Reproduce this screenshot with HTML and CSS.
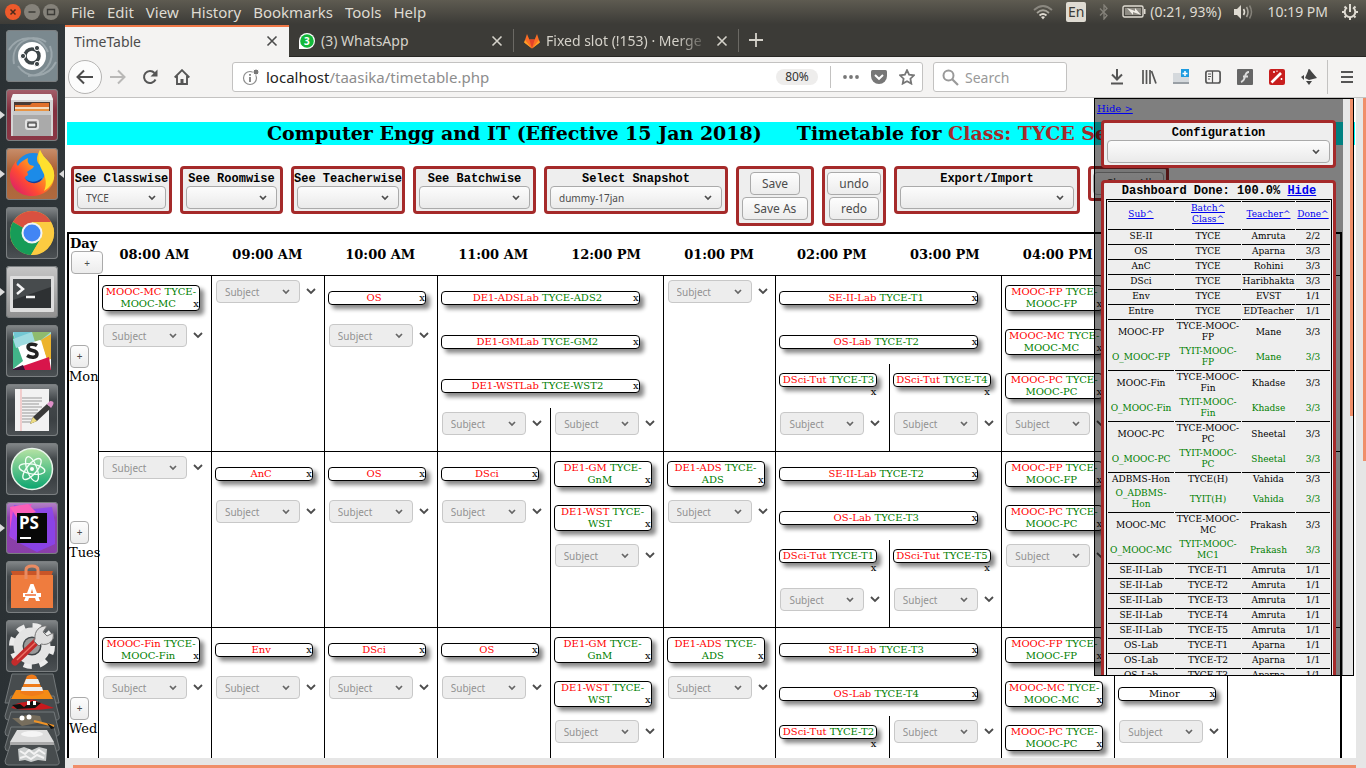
FILE: index.html
```html
<!DOCTYPE html>
<html lang="en">
<head>
<meta charset="utf-8">
<title>TimeTable</title>
<link rel="stylesheet" href="styles.css">
</head>
<body>
<header class="panel">
  <div class="winbtns">
    <button class="win win-close" aria-label="Close"><svg width="16" height="16" viewBox="0 0 16 16"><path d="M5.500 5.500l5 5M10.500 5.500l-5 5" stroke="#4a2a1c" stroke-width="1.500"/></svg></button>
    <button class="win" aria-label="Minimise"><svg width="16" height="16" viewBox="0 0 16 16"><path d="M4.500 8h7" stroke="#3c3b37" stroke-width="1.500"/></svg></button>
    <button class="win" aria-label="Maximise"><svg width="16" height="16" viewBox="0 0 16 16"><path d="M4.500 5.500h7v5h-7z" fill="none" stroke="#3c3b37" stroke-width="1.400"/></svg></button>
  </div>
  <nav class="menu"><a href="#">File</a><a href="#">Edit</a><a href="#">View</a><a href="#">History</a><a href="#">Bookmarks</a><a href="#">Tools</a><a href="#">Help</a></nav>
  <div class="tray">
    <svg width="20" height="16" viewBox="0 0 20 16" fill="none" stroke-width="1.800"><path d="M1 6q9-8 18 0" stroke="#8b8880"/><path d="M4 9q6-5.500 12 0" stroke="#a5a299"/><path d="M6.500 11.500q3.500-3 7 0" stroke="#dfdbd2"/><path d="M8 13l2 2.500 2-2.500q-2-1.500-4 0z" fill="#dfdbd2"/></svg>
    <span class="lang">En</span>
    <svg width="10" height="16" viewBox="0 0 10 16" fill="none" stroke="#85827a" stroke-width="1.300"><path d="M1 4.500l7 7L5 15V1l3 3.500-7 7"/></svg>
    <svg class="battery" width="24" height="13" viewBox="0 0 24 13"><rect x="1" y="1" width="20" height="11" rx="1.500" fill="none" stroke="#dfdbd2" stroke-width="1.400"/><rect x="3" y="3" width="16" height="7" fill="#8f8c84"/><path d="M22 4h1.500v5H22" fill="#dfdbd2"/><path d="M5 3l8 3V3l6 7-8-3v3z" fill="#f0ede6"/></svg>
    <span class="charge">(0:21, 93%)</span>
    <svg width="20" height="16" viewBox="0 0 20 16" fill="none"><path d="M0 5h3l4-4v14l-4-4H0z" fill="#dfdbd2"/><path d="M9.500 5q2 3 0 6" stroke="#dfdbd2" stroke-width="1.600"/><path d="M12.500 3q3 5 0 10" stroke="#a5a299" stroke-width="1.600"/><path d="M15.500 1.500q4 6.500 0 13" stroke="#85827a" stroke-width="1.500"/></svg>
    <span class="clock">10:19 PM</span>
    <svg width="18" height="18" viewBox="0 0 18 18" fill="none" stroke="#dfdbd2"><path d="M6 4.500a5.300 5.300 0 1 0 6 0" stroke-width="2"/><path d="M9 1v8" stroke-width="2"/><path d="M3.500 3.500l1.500 1.500M14.500 3.500L13 5M1 9h2.500M14.500 9H17M3.500 14.500L5 13M14.500 14.500L13 13M9 14.500V17" stroke-width="2"/></svg>
  </div>
</header>
<div class="desktop">
<aside class="launcher">
  <button class="tile t-dash" aria-label="Dash"><svg width="52" height="52" viewBox="0 0 52 52"><path d="M8 34C4 12 26 2 40 12M44 16c6 16-6 30-22 30M3 20C12 4 34 4 42 22M50 32c-8 16-28 18-38 4" fill="none" stroke="#aab4b8" stroke-width="2" opacity=".7"/><circle cx="26" cy="26" r="14" fill="#fff"/><circle cx="26" cy="26" r="7" fill="none" stroke="#3e4649" stroke-width="3.500"/><g fill="#3e4649" stroke="#fff"><circle cx="17" cy="26" r="2.600"/><circle cx="31" cy="18" r="2.600"/><circle cx="31" cy="34" r="2.600"/></g></svg></button>
  <button class="tile t-files run" aria-label="Files"><svg width="52" height="52" viewBox="0 0 52 52"><path d="M7 5h38l2 5v37H5V10z" fill="#d4d4d4"/><path d="M7 5h38l2 6H5z" fill="#f2f2f2"/><path d="M8 13h36v10H8z" fill="#4a3b35"/><path d="M9 16h15l2-2h17v8H9z" fill="#e0702c"/><path d="M9 18h34v4H9z" fill="#f4dcc0"/><path d="M9 20h34v3H9z" fill="#e99443"/><path d="M7 22h38v25H7z" fill="#aaa"/><path d="M7 22h38v4H7z" fill="#c8c8c8"/><rect x="20" y="31" width="12" height="9" rx="2" fill="#999" stroke="#e2e2e2" stroke-width="2"/><path d="M22 34h8v4h-8z" fill="#eee" stroke="#333"/></svg></button>
  <button class="tile t-firefox run active" aria-label="Firefox"><svg width="52" height="52" viewBox="0 0 52 52"><defs><linearGradient id="ff" x1="1" y1="0" x2="0" y2="1"><stop offset="0" stop-color="#fff34f"/><stop offset=".35" stop-color="#ffa81c"/><stop offset=".65" stop-color="#ff4a33"/><stop offset="1" stop-color="#d0127c"/></linearGradient></defs><circle cx="27" cy="23" r="18" fill="#1c8be8"/><path d="M34 2c2 4 3 6 7 10 5 5 8 11 7 18-1 11-11 18-22 18C13 48 4 39 4 28c0-7 3-10 6-15 0 3 1 4 2 5 2-4 6-6 10-8-1 3 0 5 2 7l4 1c-1 3-5 4-7 6 3 5-2 3-2 6 2 5 11 6 17 2 5-6 3-12-2-15-5-4-3-10 0-15z" fill="url(#ff)"/><path d="M34 2c2 4 3 6 7 10 5 5 8 11 7 18-1 5-5 10-10 13 3-6 2-13-1-19-4-7-6-14-3-22z" fill="#ffe02e"/><path d="M18 29c3 6 13 6 18 1-1 6-13 8-18-1z" fill="#173c9b"/></svg></button>
  <button class="tile" aria-label="Chrome"><svg width="52" height="52" viewBox="0 0 52 52"><circle cx="26" cy="26" r="22" fill="#fbc93d"/><path d="M26 26L7 15a22 22 0 0 1 38 0H26z" fill="#d95140"/><path d="M26 26L7 15a22 22 0 0 0 18 33l10-17z" fill="#179c58"/><path d="M26 15h19a22 22 0 0 1-20 33l10-17z" fill="#fccb41"/><circle cx="26" cy="26" r="10.500" fill="#f4f4f4"/><circle cx="26" cy="26" r="8.500" fill="#4285f4"/></svg></button>
  <button class="tile t-term run" aria-label="Terminal"><svg width="52" height="52" viewBox="0 0 52 52"><rect x="4" y="10" width="44" height="36" rx="1" fill="#dedede"/><path d="M7 13h38v29H7z" fill="#2e3133"/><path d="M7 13h38v8L7 34z" fill="#474b4d"/><path d="M11 18l6 5-6 5M20 31h9" stroke="#f4f4f4" stroke-width="2.500" fill="none"/></svg></button>
  <button class="tile" aria-label="Slack"><svg width="52" height="52" viewBox="0 0 52 52"><path d="M7 7h38v38H7z" fill="#fff"/><path d="M7 7h21L10 19z" fill="#72c7d3"/><path d="M7 9l10 27L7 44z" fill="#42b589"/><path d="M26 7h19v5l-9 3-10 3-16 5-3-9z" fill="#9edbe0"/><path d="M26 7h10l-1 8-6 2zM36 7h9L35 15z" fill="#8fbb6e"/><path d="M35 15l10-6v25l-4 1z" fill="#ecb32d"/><path d="M14 21l20-6 7 20-21 7z" fill="#fff"/><path d="M17 41l26-9 2 13H16z" fill="#d8154b"/><path d="M7 44l10-4 2 5H7z" fill="#3b1538"/><path d="M31 20.500c-3-2-9-2-9 1.500 0 5 9 2 9 7 0 4-6 4-10 1.500" fill="none" stroke="#222" stroke-width="3.500"/></svg></button>
  <button class="tile" aria-label="Text Editor"><svg width="52" height="52" viewBox="0 0 52 52"><path d="M9 5h34v42H9z" fill="#f2f2f2"/><path d="M15 5v42" stroke="#f0a9a9"/><path d="M16 14h20M16 17h20M16 20h17M16 23h20M16 26h16M16 29h18M16 32h14M16 35h12M16 38h10" stroke="#999"/><path d="M24 40l3-7 14-13 4 4-14 13z" fill="#3a3a3a"/><path d="M24 40l3-7 4 4z" fill="#eddc81"/><path d="M41 20l3-3q5 0 3 4l-2 3z" fill="#dd8fc7"/></svg></button>
  <button class="tile" aria-label="Atom"><svg width="52" height="52" viewBox="0 0 52 52"><defs><linearGradient id="at" x2="0" y2="1"><stop stop-color="#b7e3a4"/><stop offset="1" stop-color="#0aa56f"/></linearGradient></defs><circle cx="26" cy="26" r="20.500" fill="url(#at)" stroke="#e8f4ea" stroke-width="1.500"/><g fill="none" stroke="#f4fff8" stroke-width="1.300"><ellipse cx="26" cy="26" rx="13" ry="5" transform="rotate(10 26 26)"/><ellipse cx="26" cy="26" rx="13" ry="5" transform="rotate(70 26 26)"/><ellipse cx="26" cy="26" rx="13" ry="5" transform="rotate(130 26 26)"/></g><circle cx="26" cy="26" r="2" fill="#fff"/></svg></button>
  <button class="tile t-ps run" aria-label="PhpStorm"><svg width="52" height="52" viewBox="0 0 52 52"><path d="M4 5l22-3-8 14-9 22-5-3z" fill="#f04ec4"/><path d="M8 3l20 4 18-2 3 15v22l-18 8-16-8L3 34z" fill="#8a43f4" opacity=".8"/><path d="M4 5l18-3 8 8-19 6z" fill="#fb5fb8"/><path d="M11 11h30v30H11z" fill="#080808"/><text x="13" y="27" class="logo-ps">PS</text><path d="M14 36h11" stroke="#fff" stroke-width="2"/></svg></button>
  <button class="tile" aria-label="Ubuntu Software"><svg width="52" height="52" viewBox="0 0 52 52"><path d="M5 10h42l-2 6H7z" fill="#c95527"/><path d="M5 14h42v33H5z" fill="#ef7c3e"/><path d="M20 18V9q0-4 6-4t6 4v9" fill="none" stroke="#e98b62" stroke-width="3"/><path d="M18 40l6.500-17h3L34 40h-4l-1-3h-6l-1 3zM24.500 33h3L26 28z" fill="#fff"/><path d="M17 34h18" stroke="#fff" stroke-width="4"/><path d="M19 34h11" stroke="#ee6c33" stroke-width="1.500"/></svg></button>
  <button class="tile" aria-label="Settings"><svg width="52" height="52" viewBox="0 0 52 52"><circle cx="26" cy="26" r="20" fill="none" stroke="#ececec" stroke-width="6" stroke-dasharray="8 7.700"/><circle cx="26" cy="26" r="14" fill="none" stroke="#e4e4e4" stroke-width="9"/><circle cx="26" cy="26" r="8" fill="#999"/><path d="M9 42L32 20" stroke="#c32b2b" stroke-width="7" stroke-linecap="round"/><path d="M11 40L31 21" stroke="#ea7064" stroke-width="1.500"/><path d="M29 19c-1-8 5-14 12-13l-4 6 4 4 6-3c2 8-5 13-12 11l-2 2-5-5z" fill="#dedede" stroke="#777"/></svg></button>
  <svg class="stack" width="65" height="96" viewBox="0 0 65 96"><g fill="#474c4e" stroke="#73787a"><path d="M12 1h41l6 29H5z"/><path d="M11 23l-6 20q0 4 3 4h48q4 0 3-4l-5-20z"/><path d="M11 39l-6 20q0 4 3 4h48q4 0 3-4l-5-20z"/><path d="M11 54l-6 20q0 4 3 4h48q4 0 3-4l-5-20z"/><path d="M11 70l-6 18q0 4 3 4h48q4 0 3-4l-5-18z"/></g><path d="M16 17h32l5 9H11z" fill="#f58b16"/><path d="M27 3q5-3 9 0l8 17q-12 6-24 0z" fill="#f07b1a"/><path d="M26 6h12l2 5H24zM22 14h20l1 4H21z" fill="#eee"/><path d="M11 35q5-6 15-6 6-5 12 0l16 6q-24 4-43 0z" fill="#c9191d"/><path d="M12 32l8-1 4 3 8-6 9 2-6 5-18 1z" fill="#111"/><path d="M27 28h3v4h-3zM33 28h3v4h-3z" fill="#fff"/><path d="M12 45h8q4-5 20-2l2 6-20 4z" fill="#776e5d"/><circle cx="22" cy="45" r="2.500" fill="#fff"/><circle cx="29" cy="44" r="2.500" fill="#fff"/><path d="M34 48l20 5" stroke="#ef9327" stroke-width="2"/><path d="M47 50l8 5-4 1z" fill="#111"/><path d="M17 57h30l7 12H10z" fill="#ddd"/><path d="M10 69h44v3H10z" fill="#aaa"/><ellipse cx="32" cy="61" rx="11" ry="3" fill="#f5f5f5"/><path d="M18 76l6-2 8 3 7-3 8 2-1 12-8-1-7 2-6-2-6 1z" fill="#c9cccc"/><path d="M20 78l5 3 4-4 5 4 5-4 6 4M20 85l6-2 5 3 6-4 7 3" stroke="#f3f3f3" stroke-width="2" fill="none"/></svg>
</aside>
<main class="browser">
  <div class="tabs">
    <div class="tab tab-on"><span class="tab-title">TimeTable</span><button class="ic" aria-label="Close tab"><svg width="12" height="12" viewBox="0 0 12 12"><path d="M1.500 1.500l9 9M10.500 1.500l-9 9" stroke="currentColor" stroke-width="1.600"/></svg></button></div>
    <div class="tab"><svg width="16" height="16" viewBox="0 0 16 16"><path d="M0 16V8a8 8 0 1 1 8 8z" fill="#fff"/><circle cx="8" cy="8" r="6.800" fill="#12b83a"/><text x="5" y="12" class="badge-no">3</text></svg><span class="tab-title">(3) WhatsApp</span><button class="ic" aria-label="Close tab"><svg width="12" height="12" viewBox="0 0 12 12"><path d="M1.500 1.500l9 9M10.500 1.500l-9 9" stroke="currentColor" stroke-width="1.600"/></svg></button></div>
    <div class="tab"><svg width="16" height="16" viewBox="0 0 16 16"><path d="M8 15.500L.2 9.500 3 1l2.300 5.500h5.400L13 1l2.800 8.500z" fill="#fc6d26"/><path d="M8 15.500L5.300 6.500h5.400z" fill="#e24329"/><path d="M8 15.500L.2 9.500l.8-2.500zM8 15.500l7.800-6L15 7z" fill="#fca326"/></svg><span class="tab-title fade">Fixed slot (!153) · Merge</span><button class="ic" aria-label="Close tab"><svg width="12" height="12" viewBox="0 0 12 12"><path d="M1.500 1.500l9 9M10.500 1.500l-9 9" stroke="currentColor" stroke-width="1.600"/></svg></button></div>
    <button class="ic newtab" aria-label="New tab"><svg width="14" height="14" viewBox="0 0 14 14"><path d="M7 0v14M0 7h14" stroke="currentColor" stroke-width="1.800"/></svg></button>
  </div>
  <div class="navbar">
    <button class="ic back" aria-label="Back"><svg width="18" height="16" viewBox="0 0 18 16"><path d="M17 8H2M8 1.500L1.500 8 8 14.500" fill="none" stroke="#4c4c4c" stroke-width="2"/></svg></button>
    <button class="ic" aria-label="Forward"><svg width="16" height="16" viewBox="0 0 16 16"><path d="M0 8h14M8 1.500L14.500 8 8 14.500" fill="none" stroke="#b9b8b7" stroke-width="2"/></svg></button>
    <button class="ic" aria-label="Reload"><svg width="16" height="16" viewBox="0 0 16 16"><path d="M13.500 10.500A6 6 0 1 1 12.500 4" fill="none" stroke="#555" stroke-width="2"/><path d="M15.500.5v7h-7z" fill="#555"/></svg></button>
    <button class="ic" aria-label="Home"><svg width="16" height="16" viewBox="0 0 16 16"><path d="M.7 8.500L8 1.200l7.300 7.300M3 7v8h10V7" fill="none" stroke="#555" stroke-width="1.900"/><path d="M6.500 15v-5h3v5z" fill="#555"/></svg></button>
    <div class="urlbar">
      <svg width="18" height="18" viewBox="0 0 18 18"><circle cx="8" cy="10" r="6.500" fill="none" stroke="#8d8d8d" stroke-width="1.200"/><path d="M8 9v5M8 6v1.800" stroke="#777" stroke-width="1.700"/><circle cx="14" cy="4" r="3" fill="#777" stroke="#fff"/></svg>
      <span class="url">localhost<i>/taasika/timetable.php</i></span>
      <button class="zoom">80%</button>
      <span class="rule"></span>
      <button class="ic" aria-label="Page actions"><svg width="16" height="4" viewBox="0 0 16 4" fill="#777"><circle cx="2" cy="2" r="1.900"/><circle cx="8" cy="2" r="1.900"/><circle cx="14" cy="2" r="1.900"/></svg></button>
      <button class="ic" aria-label="Pocket"><svg width="16" height="14" viewBox="0 0 16 14"><path d="M1.500 0h13Q16 0 16 1.500V6A8 8 0 0 1 0 6V1.500Q0 0 1.500 0z" fill="#777"/><path d="M4 5l4 3.800L12 5" fill="none" stroke="#fff" stroke-width="2"/></svg></button>
      <button class="ic" aria-label="Bookmark"><svg width="16" height="16" viewBox="0 0 16 16"><path d="M8 1.200l2.100 4.500 4.900.6-3.600 3.400.9 4.900L8 12.200l-4.300 2.400.9-4.900L1 6.300l4.900-.6z" fill="none" stroke="#777" stroke-width="1.800"/></svg></button>
    </div>
    <label class="search"><svg width="17" height="17" viewBox="0 0 17 17"><circle cx="6.500" cy="6.500" r="5" fill="none" stroke="#999" stroke-width="2"/><path d="M10 10l6 6" stroke="#999" stroke-width="2.200"/></svg><input type="text" placeholder="Search" aria-label="Search"></label>
    <div class="tools">
      <button class="ic" aria-label="Downloads"><svg width="16" height="16" viewBox="0 0 16 16"><path d="M8 0v10M3 5.500l5 5 5-5M2 14.500h12" fill="none" stroke="#555" stroke-width="2"/></svg></button>
      <button class="ic" aria-label="Library"><svg width="16" height="16" viewBox="0 0 16 16"><path d="M2 1v14M5.500 1v14M9 1v14M10.500 2L15 14.500" stroke="#555" stroke-width="1.700"/></svg></button>
      <button class="ic" aria-label="Containers"><svg width="16" height="16" viewBox="0 0 16 16"><path d="M0 4h8v4h8v7H0z" fill="#d5d9dd"/><path d="M0 13h16v2H0z" fill="#999fa5"/><path d="M8 0h8v8H8z" fill="#1e9be0"/><path d="M12 2v5M9.500 4.500h5" stroke="#fff" stroke-width="1.500"/></svg></button>
      <button class="ic" aria-label="Sidebar"><svg width="16" height="16" viewBox="0 0 16 16"><rect x=".9" y="2" width="14.200" height="12" rx="2" fill="none" stroke="#555" stroke-width="1.700"/><path d="M7.500 2v12M3 5h3M3 7.500h3M3 10h2" stroke="#555" stroke-width="1.200"/></svg></button>
      <button class="ic" aria-label="Flash"><svg width="16" height="16" viewBox="0 0 16 16"><rect width="16" height="16" rx="1" fill="#666"/><path d="M12 3q-3 0-4 4.500T4 13M6 7.500h5" fill="none" stroke="#ddd" stroke-width="1.900"/></svg></button>
      <button class="ic" aria-label="Wand"><svg width="16" height="16" viewBox="0 0 16 16"><rect width="16" height="16" rx="2" fill="#c81e1e"/><path d="M2.500 13.500L12 4" stroke="#fff" stroke-width="2.600"/><path d="M5 2v2M4 3h2M12.500 9v2M11.500 10h2M8 1.500v1.500" stroke="#fff"/></svg></button>
      <button class="ic" aria-label="Extension"><svg width="16" height="16" viewBox="0 0 16 16" fill="#444"><path d="M8 0q1 0 2 2l6 7-8 2-4-2 3-7q0-2 1-2zM0 8l3-2v5zM5 12l6 0-3 4z"/></svg></button>
      <span class="rule rule-tall"></span>
      <button class="ic" aria-label="Menu"><svg width="12" height="12" viewBox="0 0 12 12"><path d="M0 1h12M0 6h12M0 11h12" stroke="#555" stroke-width="1.800"/></svg></button>
    </div>
  </div>
  <div class="viewport">
    <div class="page">
      <h2 class="banner">Computer Engg and IT (Effective 15 Jan 2018)<span class="banner-for">Timetable for <em>Class: TYCE Sem</em></span></h2>
      <div class="controls">
        <div class="box w-class"><label for="s1">See Classwise</label><select id="s1"><option>TYCE</option></select></div>
        <div class="box w-room"><label for="s2">See Roomwise</label><select id="s2"><option></option></select></div>
        <div class="box w-teacher"><label for="s3">See Teacherwise</label><select id="s3"><option></option></select></div>
        <div class="box w-batch"><label for="s4">See Batchwise</label><select id="s4"><option></option></select></div>
        <div class="box w-snap"><label for="s5">Select Snapshot</label><select id="s5"><option>dummy-17jan</option></select></div>
        <div class="box w-save"><button class="btn">Save</button><button class="btn">Save As</button></div>
        <div class="box w-undo"><button class="btn">undo</button><button class="btn">redo</button></div>
        <div class="box w-export"><label for="s6">Export/Import</label><select id="s6"><option></option></select></div>
        <div class="box w-clear"><button class="btn">Clear All</button></div>
      </div>
      <table class="tt">
        <colgroup><col class="col-day"><col span="11"></colgroup>
        <thead><tr><th class="day">Day<button class="btn plus-wide">+</button></th><th>08:00 AM</th><th>09:00 AM</th><th>10:00 AM</th><th>11:00 AM</th><th>12:00 PM</th><th>01:00 PM</th><th>02:00 PM</th><th>03:00 PM</th><th>04:00 PM</th><th>05:00 PM</th><th>06:00 PM</th></tr></thead>
        <tbody>
        <tr>
          <th class="day dayname"><button class="btn plus">+</button>Mon</th>
          <td>
            <div class="slot"><div class="chip"><b>MOOC-MC</b> <i>TYCE-MOOC-MC</i><button class="del">x</button></div></div>
            <div class="slot add"><select disabled aria-label="Subject"><option>Subject</option></select><select class="more" aria-label="More"></select></div>
          </td>
          <td><div class="slot add"><select disabled aria-label="Subject"><option>Subject</option></select><select class="more" aria-label="More"></select></div></td>
          <td>
            <div class="slot"><div class="chip"><b>OS</b><button class="del">x</button></div></div>
            <div class="slot add"><select disabled aria-label="Subject"><option>Subject</option></select><select class="more" aria-label="More"></select></div>
          </td>
          <td colspan="2">
            <div class="slot"><div class="chip wide"><b>DE1-ADSLab</b> <i>TYCE-ADS2</i><button class="del">x</button></div></div>
            <div class="slot"><div class="chip wide"><b>DE1-GMLab</b> <i>TYCE-GM2</i><button class="del">x</button></div></div>
            <div class="slot"><div class="chip wide"><b>DE1-WSTLab</b> <i>TYCE-WST2</i><button class="del">x</button></div></div>
            <div class="split">
              <div class="slot add"><select disabled aria-label="Subject"><option>Subject</option></select><select class="more" aria-label="More"></select></div>
              <div class="slot add"><select disabled aria-label="Subject"><option>Subject</option></select><select class="more" aria-label="More"></select></div>
            </div>
          </td>
          <td><div class="slot add"><select disabled aria-label="Subject"><option>Subject</option></select><select class="more" aria-label="More"></select></div></td>
          <td colspan="2">
            <div class="slot"><div class="chip wide"><b>SE-II-Lab</b> <i>TYCE-T1</i><button class="del">x</button></div></div>
            <div class="slot"><div class="chip wide"><b>OS-Lab</b> <i>TYCE-T2</i><button class="del">x</button></div></div>
            <div class="split">
              <div class="slot"><div class="chip full"><b>DSci-Tut</b> <i>TYCE-T3</i><button class="del">x</button></div></div>
              <div class="slot"><div class="chip full"><b>DSci-Tut</b> <i>TYCE-T4</i><button class="del">x</button></div></div>
              <div class="slot add"><select disabled aria-label="Subject"><option>Subject</option></select><select class="more" aria-label="More"></select></div>
              <div class="slot add"><select disabled aria-label="Subject"><option>Subject</option></select><select class="more" aria-label="More"></select></div>
            </div>
          </td>
          <td>
            <div class="slot"><div class="chip"><b>MOOC-FP</b> <i>TYCE-MOOC-FP</i><button class="del">x</button></div></div>
            <div class="slot"><div class="chip"><b>MOOC-MC</b> <i>TYCE-MOOC-MC</i><button class="del">x</button></div></div>
            <div class="slot"><div class="chip"><b>MOOC-PC</b> <i>TYCE-MOOC-PC</i><button class="del">x</button></div></div>
            <div class="slot add"><select disabled aria-label="Subject"><option>Subject</option></select><select class="more" aria-label="More"></select></div>
          </td>
          <td></td><td></td>
        </tr>
        <tr>
          <th class="day dayname"><button class="btn plus">+</button>Tues</th>
          <td><div class="slot add"><select disabled aria-label="Subject"><option>Subject</option></select><select class="more" aria-label="More"></select></div></td>
          <td>
            <div class="slot"><div class="chip"><b>AnC</b><button class="del">x</button></div></div>
            <div class="slot add"><select disabled aria-label="Subject"><option>Subject</option></select><select class="more" aria-label="More"></select></div>
          </td>
          <td>
            <div class="slot"><div class="chip"><b>OS</b><button class="del">x</button></div></div>
            <div class="slot add"><select disabled aria-label="Subject"><option>Subject</option></select><select class="more" aria-label="More"></select></div>
          </td>
          <td>
            <div class="slot"><div class="chip"><b>DSci</b><button class="del">x</button></div></div>
            <div class="slot add"><select disabled aria-label="Subject"><option>Subject</option></select><select class="more" aria-label="More"></select></div>
          </td>
          <td>
            <div class="slot"><div class="chip"><b>DE1-GM</b> <i>TYCE-GnM</i><button class="del">x</button></div></div>
            <div class="slot"><div class="chip"><b>DE1-WST</b> <i>TYCE-WST</i><button class="del">x</button></div></div>
            <div class="slot add"><select disabled aria-label="Subject"><option>Subject</option></select><select class="more" aria-label="More"></select></div>
          </td>
          <td>
            <div class="slot"><div class="chip"><b>DE1-ADS</b> <i>TYCE-ADS</i><button class="del">x</button></div></div>
            <div class="slot add"><select disabled aria-label="Subject"><option>Subject</option></select><select class="more" aria-label="More"></select></div>
          </td>
          <td colspan="2">
            <div class="slot"><div class="chip wide"><b>SE-II-Lab</b> <i>TYCE-T2</i><button class="del">x</button></div></div>
            <div class="slot"><div class="chip wide"><b>OS-Lab</b> <i>TYCE-T3</i><button class="del">x</button></div></div>
            <div class="split">
              <div class="slot"><div class="chip full"><b>DSci-Tut</b> <i>TYCE-T1</i><button class="del">x</button></div></div>
              <div class="slot"><div class="chip full"><b>DSci-Tut</b> <i>TYCE-T5</i><button class="del">x</button></div></div>
              <div class="slot add"><select disabled aria-label="Subject"><option>Subject</option></select><select class="more" aria-label="More"></select></div>
              <div class="slot add"><select disabled aria-label="Subject"><option>Subject</option></select><select class="more" aria-label="More"></select></div>
            </div>
          </td>
          <td>
            <div class="slot"><div class="chip"><b>MOOC-FP</b> <i>TYCE-MOOC-FP</i><button class="del">x</button></div></div>
            <div class="slot"><div class="chip"><b>MOOC-PC</b> <i>TYCE-MOOC-PC</i><button class="del">x</button></div></div>
            <div class="slot add"><select disabled aria-label="Subject"><option>Subject</option></select><select class="more" aria-label="More"></select></div>
          </td>
          <td></td><td></td>
        </tr>
        <tr>
          <th class="day dayname"><button class="btn plus">+</button>Wed</th>
          <td>
            <div class="slot"><div class="chip"><b>MOOC-Fin</b> <i>TYCE-MOOC-Fin</i><button class="del">x</button></div></div>
            <div class="slot add"><select disabled aria-label="Subject"><option>Subject</option></select><select class="more" aria-label="More"></select></div>
          </td>
          <td>
            <div class="slot"><div class="chip"><b>Env</b><button class="del">x</button></div></div>
            <div class="slot add"><select disabled aria-label="Subject"><option>Subject</option></select><select class="more" aria-label="More"></select></div>
          </td>
          <td>
            <div class="slot"><div class="chip"><b>DSci</b><button class="del">x</button></div></div>
            <div class="slot add"><select disabled aria-label="Subject"><option>Subject</option></select><select class="more" aria-label="More"></select></div>
          </td>
          <td>
            <div class="slot"><div class="chip"><b>OS</b><button class="del">x</button></div></div>
            <div class="slot add"><select disabled aria-label="Subject"><option>Subject</option></select><select class="more" aria-label="More"></select></div>
          </td>
          <td>
            <div class="slot"><div class="chip"><b>DE1-GM</b> <i>TYCE-GnM</i><button class="del">x</button></div></div>
            <div class="slot"><div class="chip"><b>DE1-WST</b> <i>TYCE-WST</i><button class="del">x</button></div></div>
            <div class="slot add"><select disabled aria-label="Subject"><option>Subject</option></select><select class="more" aria-label="More"></select></div>
          </td>
          <td>
            <div class="slot"><div class="chip"><b>DE1-ADS</b> <i>TYCE-ADS</i><button class="del">x</button></div></div>
            <div class="slot add"><select disabled aria-label="Subject"><option>Subject</option></select><select class="more" aria-label="More"></select></div>
          </td>
          <td colspan="2">
            <div class="slot"><div class="chip wide"><b>SE-II-Lab</b> <i>TYCE-T3</i><button class="del">x</button></div></div>
            <div class="slot"><div class="chip wide"><b>OS-Lab</b> <i>TYCE-T4</i><button class="del">x</button></div></div>
            <div class="split">
              <div class="slot"><div class="chip full"><b>DSci-Tut</b> <i>TYCE-T2</i><button class="del">x</button></div></div>
              <div class="slot add"><select disabled aria-label="Subject"><option>Subject</option></select><select class="more" aria-label="More"></select></div>
            </div>
          </td>
          <td>
            <div class="slot"><div class="chip"><b>MOOC-FP</b> <i>TYCE-MOOC-FP</i><button class="del">x</button></div></div>
            <div class="slot"><div class="chip"><b>MOOC-MC</b> <i>TYCE-MOOC-MC</i><button class="del">x</button></div></div>
            <div class="slot"><div class="chip"><b>MOOC-PC</b> <i>TYCE-MOOC-PC</i><button class="del">x</button></div></div>
          </td>
          <td>
            <div class="slot"></div>
            <div class="slot"><div class="chip">Minor<button class="del">x</button></div></div>
            <div class="slot add"><select disabled aria-label="Subject"><option>Subject</option></select><select class="more" aria-label="More"></select></div>
          </td>
          <td></td>
        </tr>
        </tbody>
      </table>
    </div>
    <div class="vbar"><div class="vthumb"></div></div>
    <aside class="side">
      <div class="side-body">
        <a href="#" class="hide">Hide &gt;</a>
        <div class="box"><label for="s7">Configuration</label><select id="s7"><option></option></select></div>
        <div class="box dash">
          <div class="dash-title">Dashboard Done: 100.0% <a href="#">Hide</a></div>
          <table class="load">
            <colgroup><col class="c-sub"><col class="c-sub"><col class="c-teacher"><col></colgroup>
            <thead><tr><th><a href="#">Sub^</a></th><th><a href="#">Batch^ Class^</a></th><th><a href="#">Teacher^</a></th><th><a href="#">Done^</a></th></tr></thead>
            <tbody>
            <tr><td>SE-II</td><td>TYCE</td><td>Amruta</td><td>2/2</td></tr>
            <tr><td>OS</td><td>TYCE</td><td>Aparna</td><td>3/3</td></tr>
            <tr><td>AnC</td><td>TYCE</td><td>Rohini</td><td>3/3</td></tr>
            <tr><td>DSci</td><td>TYCE</td><td>Haribhakta</td><td>3/3</td></tr>
            <tr><td>Env</td><td>TYCE</td><td>EVST</td><td>1/1</td></tr>
            <tr><td>Entre</td><td>TYCE</td><td>EDTeacher</td><td>1/1</td></tr>
            <tr><td>MOOC-FP</td><td>TYCE-MOOC-FP</td><td>Mane</td><td>3/3</td></tr>
            <tr class="over"><td>O_MOOC-FP</td><td>TYIT-MOOC-FP</td><td>Mane</td><td>3/3</td></tr>
            <tr><td>MOOC-Fin</td><td>TYCE-MOOC-Fin</td><td>Khadse</td><td>3/3</td></tr>
            <tr class="over"><td>O_MOOC-Fin</td><td>TYIT-MOOC-Fin</td><td>Khadse</td><td>3/3</td></tr>
            <tr><td>MOOC-PC</td><td>TYCE-MOOC-PC</td><td>Sheetal</td><td>3/3</td></tr>
            <tr class="over"><td>O_MOOC-PC</td><td>TYIT-MOOC-PC</td><td>Sheetal</td><td>3/3</td></tr>
            <tr><td>ADBMS-Hon</td><td>TYCE(H)</td><td>Vahida</td><td>3/3</td></tr>
            <tr class="over"><td>O_ADBMS-Hon</td><td>TYIT(H)</td><td>Vahida</td><td>3/3</td></tr>
            <tr><td>MOOC-MC</td><td>TYCE-MOOC-MC</td><td>Prakash</td><td>3/3</td></tr>
            <tr class="over"><td>O_MOOC-MC</td><td>TYIT-MOOC-MC1</td><td>Prakash</td><td>3/3</td></tr>
            <tr><td>SE-II-Lab</td><td>TYCE-T1</td><td>Amruta</td><td>1/1</td></tr>
            <tr><td>SE-II-Lab</td><td>TYCE-T2</td><td>Amruta</td><td>1/1</td></tr>
            <tr><td>SE-II-Lab</td><td>TYCE-T3</td><td>Amruta</td><td>1/1</td></tr>
            <tr><td>SE-II-Lab</td><td>TYCE-T4</td><td>Amruta</td><td>1/1</td></tr>
            <tr><td>SE-II-Lab</td><td>TYCE-T5</td><td>Amruta</td><td>1/1</td></tr>
            <tr><td>OS-Lab</td><td>TYCE-T1</td><td>Aparna</td><td>1/1</td></tr>
            <tr><td>OS-Lab</td><td>TYCE-T2</td><td>Aparna</td><td>1/1</td></tr>
            <tr><td>OS-Lab</td><td>TYCE-T3</td><td>Aparna</td><td>1/1</td></tr>
            </tbody>
          </table>
        </div>
      </div>
      <div class="vbar"><div class="vthumb"></div></div>
    </aside>
  </div>
  <div class="hbar"><div class="hthumb"></div></div>
</main>
</div>
</body>
</html>
```
FILE: styles.css
```css
* { box-sizing: border-box; }
html, body { height: 100%; }
body { margin: 0; display: flex; flex-direction: column; overflow: hidden; font-family: "Noto Sans", sans-serif; font-size: 14px; background: #fff; }
button { font: inherit; margin: 0; padding: 0; }
svg { display: block; flex: none; }
.ic { border: 0; background: none; color: inherit; display: flex; align-items: center; justify-content: center; flex: none; }

/* Desktop panel */
.panel { flex: none; height: 24px; display: flex; align-items: center; padding: 0 7px 1px 5px; color: #dfdbd2; background: linear-gradient(#5e5b51, #3c3b37); }
.winbtns { display: flex; gap: 3px; margin-right: 12px; }
.win { width: 16px; height: 16px; border: 0; border-radius: 50%; background: #85827a; }
.win-close { background: #ee5a2b; }
.menu { display: flex; gap: 12px; font-size: 15px; line-height: 22px; }
.menu a { color: inherit; text-decoration: none; }
.tray { margin-left: auto; display: flex; align-items: center; gap: 13px; line-height: 22px; }
.lang { background: #dfdbd2; color: #3c3b37; border-radius: 2px; width: 20px; height: 20px; line-height: 20px; text-align: center; }
.battery { margin-right: -9px; }

.desktop { flex: 1; min-height: 0; display: flex; }

/* Launcher */
.launcher { width: 65px; flex: none; padding: 6px 0 0 6px; background: linear-gradient(90deg, #2b3134, #303639); display: flex; flex-direction: column; gap: 7px; overflow: hidden; }
.tile { position: relative; width: 52px; height: 52px; flex: none; border: 0; border-radius: 4px; background: linear-gradient(#85898b, #44494c 30%, #3c4144 70%, #4c5154); box-shadow: inset 0 0 0 1px #7b7f81; }
.t-dash { background: #7b898f; }
.t-files { background: linear-gradient(#a5606b, #82303f 40%, #8a3745); }
.t-firefox { background: linear-gradient(#c98f6c, #ad6236 40%, #b06a3f); }
.t-term { background: linear-gradient(#c6c6c6, #8f8f8f); }
.t-ps { background: linear-gradient(#b685c8, #8c41ad 30%, #8a3fa9); }
.run::before { content: ""; position: absolute; left: -6px; top: 22px; border: 4px solid transparent; border-left: 5px solid #dcdcdc; border-right: 0; }
.active::after { content: ""; position: absolute; right: -6px; top: 22px; border: 4px solid transparent; border-right: 5px solid #dcdcdc; border-left: 0; }
.logo-ps { font: bold 17px "Noto Sans", sans-serif; fill: #fff; }
.stack { margin: -6px 0 0 -6px; }

/* Browser chrome */
.browser { flex: 1; min-width: 0; display: flex; flex-direction: column; }
.tabs { flex: none; height: 33px; display: flex; background: #3c3b37; color: #d5d2ca; border-bottom: 1px solid #282724; }
.tab { width: 225px; display: flex; align-items: center; gap: 6px; padding: 1px 11px 0 10px; background: linear-gradient(#6b6964, #6b6964) right 5px / 1px 23px no-repeat; }
.tab-on { width: 224px; background: #f4f3f2; color: #4c4c4c; border-top: 2px solid #f07746; padding: 0 11px 3px 9px; height: 33px; margin-top: 1px; }
.tab-title { flex: 1; white-space: nowrap; overflow: hidden; }
.fade { -webkit-mask-image: linear-gradient(90deg, #000 80%, transparent); mask-image: linear-gradient(90deg, #000 80%, transparent); }
.newtab { width: 34px; }
.badge-no { font: bold 10px "Noto Sans", sans-serif; fill: #fff; }
.navbar { flex: none; height: 41px; display: flex; align-items: center; padding: 0 13px 0 3px; background: #f4f3f2; border-bottom: 1px solid #c3c2c1; gap: 16px; }
.back { width: 34px; height: 34px; border: 1px solid #b5b4b3; border-radius: 50%; background: #fcfcfc; margin-right: -8px; }
.urlbar { flex: 1; height: 30px; display: flex; align-items: center; gap: 12px; padding: 0 7px 0 9px; margin-left: 26px; border: 1px solid #c3c2c1; border-radius: 3px; background: #fff; }
.url { flex: 1; margin-left: -6px; color: #222; font-size: 15px; }
.url i { color: #8d8d8d; font-style: normal; }
.zoom { width: 42px; height: 16px; line-height: 16px; border: 0; border-radius: 8px; background: #eeedec; font-size: 12px; color: #333; }
.rule { width: 1px; height: 22px; background: #c3c2c1; flex: none; }
.search { width: 134px; height: 30px; display: flex; align-items: center; gap: 6px; padding: 0 8px; margin-left: -6px; border: 1px solid #c3c2c1; border-radius: 3px; background: #fff; }
.search input { border: 0; padding: 0; width: 90px; outline: 0; font: inherit; background: none; }
.search input::placeholder { color: #999; opacity: 1; }
.tools { display: flex; align-items: center; gap: 16px; margin-left: 26px; }
.rule-tall { height: 34px; margin: 0 -3px 0 -6px; }

/* Page viewport and scroll bars */
.viewport { position: relative; flex: 1; min-height: 0; display: flex; overflow: hidden; }
.page { flex: 1; min-width: 0; overflow: hidden; padding: 24px 1px 0 2px; font-family: "DejaVu Serif", serif; font-size: 13px; color: #000; }
.vbar { flex: none; width: 10px; background: #e6e6e6; }
.vthumb { width: 3px; height: 55%; margin-left: auto; background: #f08e69; }
.hbar { flex: none; height: 10px; padding: 7px 10px 0 8px; background: #e6e6e6; }
.hthumb { height: 3px; background: #f08e69; }

.banner { margin: 0 0 21px; padding-left: 200px; height: 23px; line-height: 23px; background: #0ff; font-size: 19px; white-space: nowrap; overflow: hidden; }
.banner-for { margin-left: 35px; }
.banner em { font-style: normal; color: #a52a2a; }

.controls { display: flex; align-items: flex-start; gap: 8px; padding-left: 4px; margin-bottom: 6px; }
.box { flex: none; display: flex; flex-direction: column; align-items: center; border: 3px solid #a52a2a; border-radius: 4px; background: #eee; padding: 3px 3px 2px; }
.box label, .dash-title { font: bold 12px/14px "Liberation Mono", monospace; white-space: nowrap; color: #000; }
.w-class { width: 101px; }
.w-room { width: 103px; }
.w-teacher { width: 114px; }
.w-batch { width: 123px; }
.w-snap { width: 184px; }
.w-export { width: 186px; }
.w-save, .w-undo, .w-clear { gap: 2px; padding: 3px; }
.w-save { width: 78px; }
.w-undo { width: 64px; }
.w-clear { width: 81px; }
select { appearance: none; height: 23px; margin: 0; padding: 0 20px 0 8px; border: 1px solid #aaa; border-radius: 4px; font: 10px "Noto Sans", sans-serif; color: #4c4c4c; outline: 0;
  background: url("data:image/svg+xml,%3Csvg xmlns='http://www.w3.org/2000/svg' width='8' height='6'%3E%3Cpath d='M1 1l3 3 3-3' fill='none' stroke='%234c4c4c' stroke-width='1.700'/%3E%3C/svg%3E") right 9px center no-repeat, linear-gradient(#fcfcfc, #eaeaea); }
.box select { width: 100%; }
.btn { height: 23px; padding: 0 11px; border: 1px solid #aaa; border-radius: 4px; background: linear-gradient(#fdfdfd, #ececec); color: #4c4c4c; font: 12px "Noto Sans", sans-serif; white-space: nowrap; }

/* Timetable grid */
.tt { width: calc(100% - 13px); table-layout: fixed; border: 2px solid #000; border-collapse: separate; border-spacing: 0; }
.col-day { width: 29px; }
.tt th, .tt td { padding: 0; }
.tt thead th { height: 42px; border-bottom: 1px solid #000; }
.tt td { vertical-align: top; border-left: 1px solid #000; border-bottom: 1px solid #000; height: 176px; }
.tt .day { border: 0; text-align: left; white-space: nowrap; padding-left: 1px; line-height: 15px; }
.tt .dayname { font-weight: normal; padding-left: 0; }
.day .btn { display: block; padding: 0; font-size: 10px; }
.plus-wide { width: 32px; margin-left: 1px; }
.plus { width: 19px; margin: 0 0 1px 1px; }
.slot { height: 44px; display: flex; align-items: center; padding-left: 3px; }
.add { height: 43px; align-items: flex-start; gap: 2px; padding: 4px 0 0 4px; }
.add select { width: 84px; }
.add select:disabled { color: #929292; border-color: #c8c8c8; background-color: #ededed; background-image: url("data:image/svg+xml,%3Csvg xmlns='http://www.w3.org/2000/svg' width='8' height='6'%3E%3Cpath d='M1 1l3 3 3-3' fill='none' stroke='%23666' stroke-width='1.700'/%3E%3C/svg%3E"); opacity: 1; }
.add .more { width: 18px; padding: 0; border: 0; background: url("data:image/svg+xml,%3Csvg xmlns='http://www.w3.org/2000/svg' width='10' height='7'%3E%3Cpath d='M1 1l4 4 4-4' fill='none' stroke='%234c4c4c' stroke-width='1.800'/%3E%3C/svg%3E") center no-repeat; }
.split { display: grid; grid-template-columns: 1fr 1fr; }
.split .slot:nth-child(even) { border-left: 1px solid #000; }
.chip { width: 98px; border: 1px solid #000; border-radius: 4px; background: #fff; box-shadow: 4px 4px 4px #888; text-align: center; font-size: 10px; line-height: 12px; }
.chip b { font-weight: normal; color: #f00; }
.chip i { font-style: normal; color: #008000; }
.wide { width: 199px; }
.full { height: 14px; white-space: nowrap; margin-bottom: 12px; }
.del { float: right; border: 0; background: none; color: #000; line-height: 12px; }

/* Side drawer */
.side { position: absolute; top: 0; right: 12px; width: 260px; height: 578px; display: flex; border: 1px solid #000; background: rgba(0, 0, 0, .5); overflow: hidden; font-family: "DejaVu Serif", serif; }
.side-body { flex: 1; padding: 2px 7px 0 6px; overflow: hidden; }
.side a { color: #00e; }
.hide { display: block; margin: 0 0 4px -4px; font-size: 10px; line-height: 15px; }
.side .box { margin-bottom: 12px; }
.side .dash { padding: 1px 1px 0 2px; align-items: stretch; }
.dash-title { text-align: center; line-height: 15px; }
.load { width: 100%; table-layout: fixed; border: 1px solid #000; border-collapse: separate; border-spacing: 1px; font-size: 9px; line-height: 11px; text-align: center; color: #000; }
.c-sub { width: 66px; }
.c-teacher { width: 53px; }
.load th, .load td { padding: 1px 0; border-top: 1px solid #000; font-weight: normal; }
.load th { padding-bottom: 3px; }
.load .over td { border-top: 0; color: #008000; }
```
